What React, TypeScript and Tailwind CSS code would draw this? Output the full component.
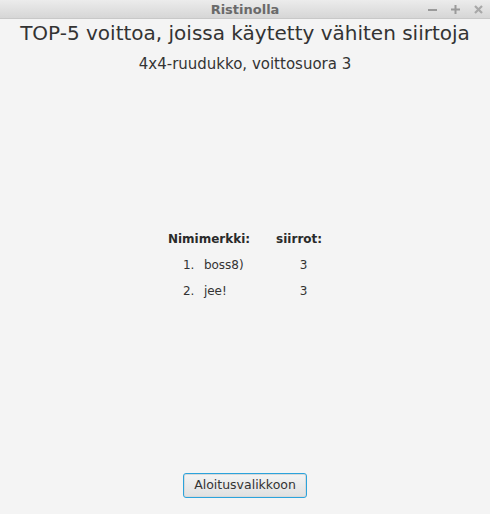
import React from "react";

export default function App() {
  const rows = [
    { n: "1.", name: "boss8)", s: "3" },
    { n: "2.", name: "jee!", s: "3" },
  ];
  return (
    <div
      className="w-[490px] h-[514px] flex flex-col bg-[#f4f4f4] text-[#333333] overflow-hidden"
      style={{ fontFamily: '"DejaVu Sans", sans-serif' }}
    >
      <div className="h-[19px] relative flex items-center justify-center bg-gradient-to-b from-[#ececec] to-[#d6d6d6] border-b border-[#c8c8c8]">
        <span className="text-[13px] font-bold text-[#6a6a6a] leading-none">Ristinolla</span>
        <div className="absolute right-[6px] top-0 h-full flex items-center gap-[12px] text-[#8a8a8a]">
          <svg width="11" height="11" viewBox="0 0 11 11"><rect x="1" y="5" width="9" height="2" fill="#9a9a9a" /></svg>
          <svg width="11" height="11" viewBox="0 0 11 11"><rect x="1" y="4.5" width="9" height="2" fill="#9a9a9a" /><rect x="4.5" y="1" width="2" height="9" fill="#9a9a9a" /></svg>
          <svg width="11" height="11" viewBox="0 0 11 11"><path d="M2 2 L9 9 M9 2 L2 9" stroke="#a8a8a8" strokeWidth="2.2" /></svg>
        </div>
      </div>
      <div className="flex-1 flex flex-col items-center">
        <div className="mt-[2px] text-[20px] leading-[24px] text-[#333]">TOP-5 voittoa, joissa käytetty vähiten siirtoja</div>
        <div className="mt-[10px] text-[15px] leading-[18px] text-[#333]">4x4-ruudukko, voittosuora 3</div>
        <div className="mt-[153px] grid grid-cols-[auto_auto] gap-x-[26px] text-[12px] leading-[26px]">
          <div className="font-bold text-[#2a2a2a]">Nimimerkki:</div>
          <div className="font-bold text-[#2a2a2a]">siirrot:</div>
          {rows.map((r) => (
            <React.Fragment key={r.n}>
              <div className="pl-[15px] flex">
                <span className="w-[21px]">{r.n}</span>
                <span>{r.name}</span>
              </div>
              <div className="text-center pl-[9px]">{r.s}</div>
            </React.Fragment>
          ))}
        </div>
        <div className="flex-1" />
        <button className="mb-[16px] w-[124px] h-[25px] rounded-[3px] border border-[#2ba3dc] bg-gradient-to-b from-[#f4f4f4] to-[#e0e0e0] text-[12.5px] text-[#333] shadow-[inset_0_0_0_1px_#d8d8d8]">
          Aloitusvalikkoon
        </button>
      </div>
    </div>
  );
}
